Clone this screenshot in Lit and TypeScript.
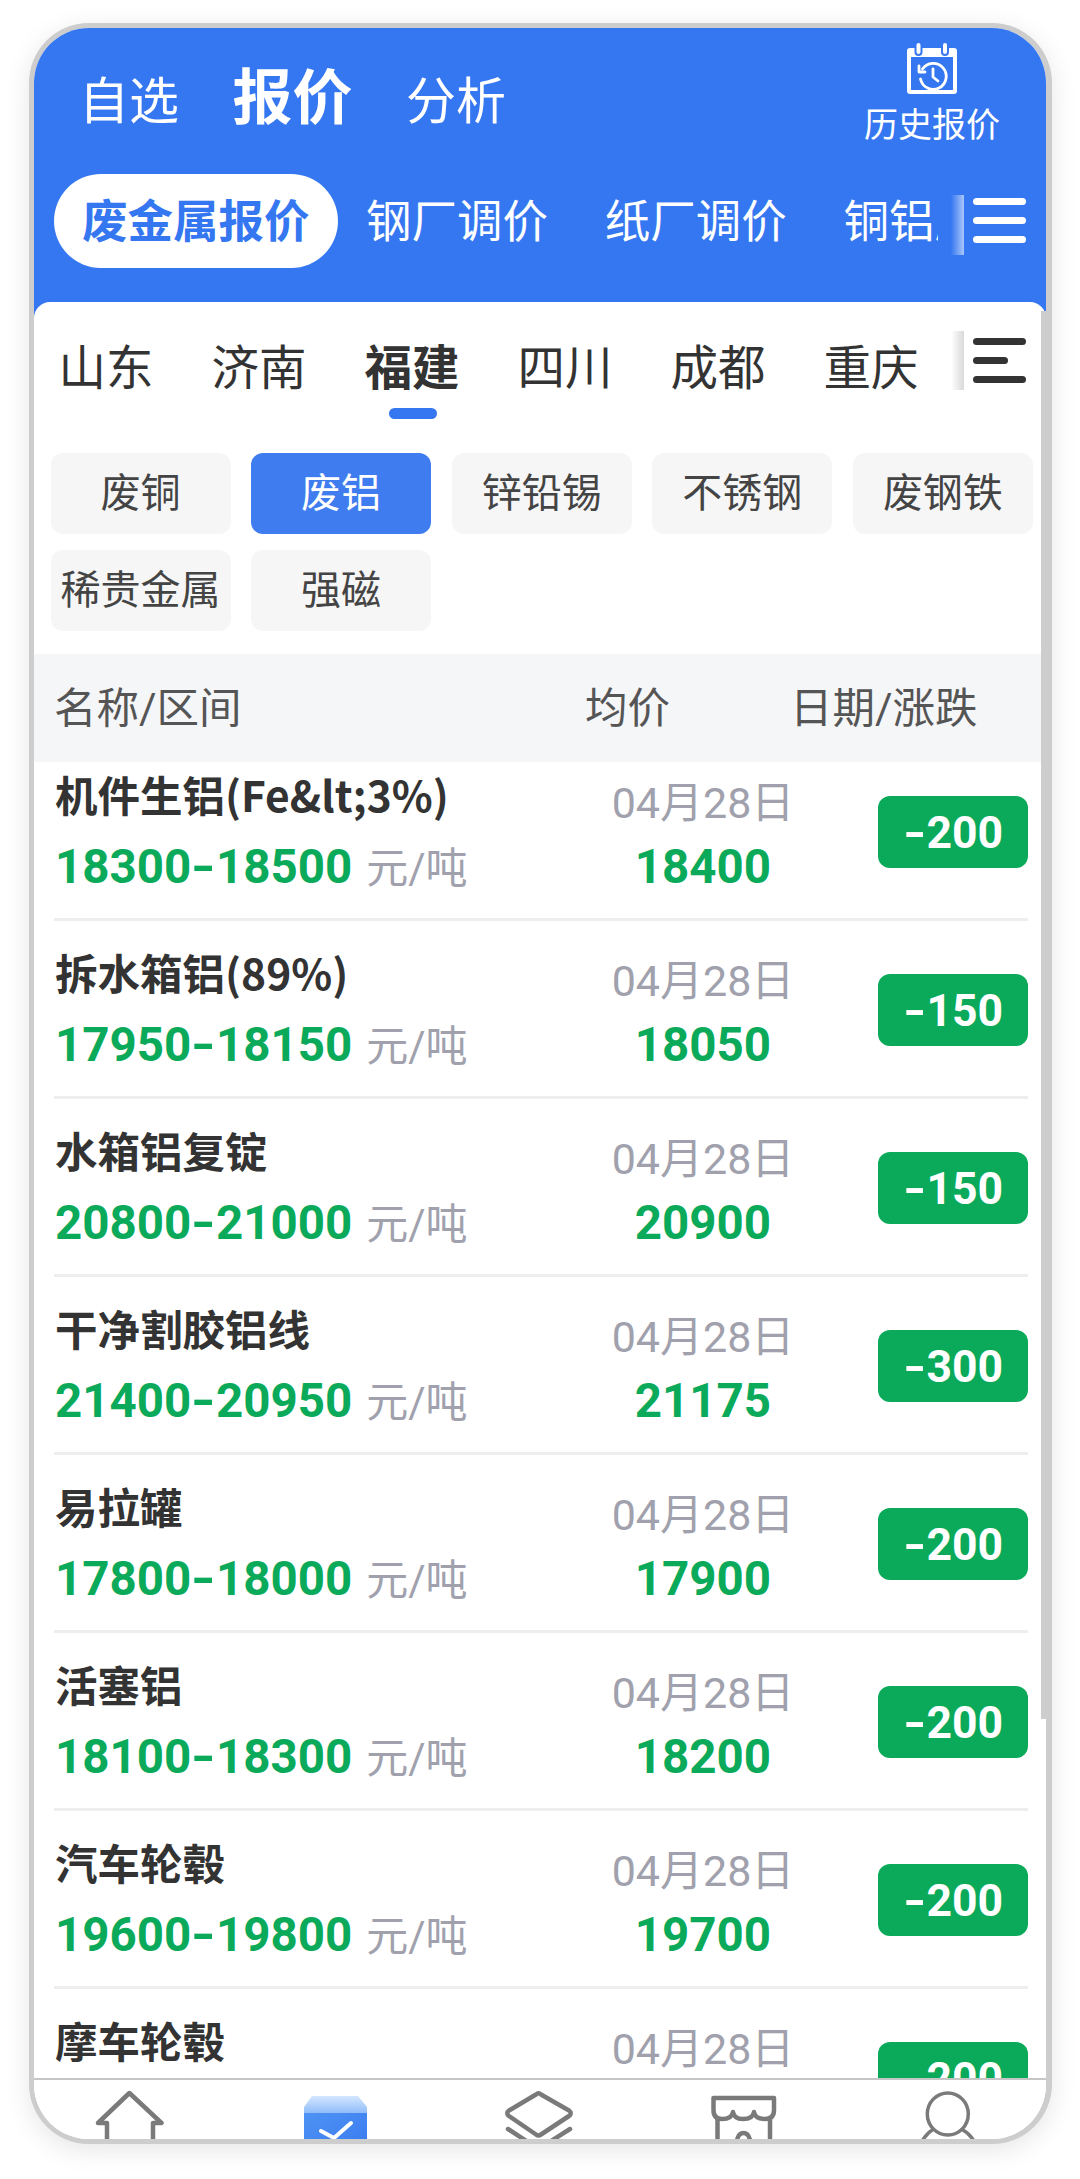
import { LitElement, html, css, svg } from "lit";
import { customElement } from "lit/decorators.js";

const ROWS = [
  ["机件生铝(Fe&lt;3%)", "18300", "18500", "18400", "200"],
  ["拆水箱铝(89%)", "17950", "18150", "18050", "150"],
  ["水箱铝复锭", "20800", "21000", "20900", "150"],
  ["干净割胶铝线", "21400", "20950", "21175", "300"],
  ["易拉罐", "17800", "18000", "17900", "200"],
  ["活塞铝", "18100", "18300", "18200", "200"],
  ["汽车轮毂", "19600", "19800", "19700", "200"],
  ["摩车轮毂", "18000", "18200", "18100", "200"],
];
const CITIES = ["山东", "济南", "福建", "四川", "成都", "重庆", "陕西"];
const CHIPS = ["废铜", "废铝", "锌铅锡", "不锈钢", "废钢铁", "稀贵金属", "强磁"];
const CATS = ["废金属报价", "钢厂调价", "纸厂调价", "铜铝废料"];

const NAV_ICONS = [
  svg`<path d="M12 64V37H3L34.4 7 66.5 37H58V64" fill="none" stroke="#7a7a7a" stroke-width="4.5" stroke-linejoin="round" stroke-linecap="round"/>`,
  svg`<defs>
      <linearGradient id="boxTop" x1="0" y1="0" x2="0" y2="1"><stop offset="0" stop-color="#d4e6ff"/><stop offset="1" stop-color="#8fbdf9"/></linearGradient>
      <linearGradient id="boxBody" x1="0" y1="0" x2="1" y2="1"><stop offset="0" stop-color="#4f93f4"/><stop offset="1" stop-color="#3a7bef"/></linearGradient>
    </defs>
    <path d="M6 27V21L14 10H60L69 21V27Z" fill="url(#boxTop)"/>
    <rect x="6" y="27" width="63" height="36" fill="url(#boxBody)"/>
    <path d="M23 45 36 52 53 37" fill="none" stroke="#fff" stroke-width="4" stroke-linecap="round" stroke-linejoin="round"/>`,
  svg`<g fill="none" stroke="#7a7a7a" stroke-width="4.5" stroke-linejoin="round" stroke-linecap="round">
      <path d="M36 8.5Q38.6 6 41 8.5L69 24.5Q72.5 27 69 30L41 48.5Q38.6 50.5 36 48.5L9 30Q5.5 27 9 24.5Z"/>
      <path d="M8 43 38.6 63 70 43"/>
    </g>`,
  svg`<g fill="none" stroke="#7a7a7a" stroke-width="4.5" stroke-linejoin="round" stroke-linecap="round">
      <path d="M11.5 12H72V24Q72 33 63 33 53 33 52 26 51 33 41 33 32 33 31 26 30 33 20 33 11.5 33 11.5 24Z"/>
      <path d="M15.5 33V64M68 33V64M34 64Q34 47 41.5 47 49 47 49 64"/>
    </g>`,
  svg`<g fill="none" stroke="#7a7a7a" stroke-width="3.5" stroke-linecap="round">
      <ellipse cx="42.8" cy="28" rx="20.5" ry="21"/>
      <path d="M17 55Q22 47 28 43.5M57 43.5Q64 47 69 55"/>
    </g>`,
];

@customElement("app-root")
export class AppRoot extends LitElement {
  static styles = css`
    :host { display: block; width: 1080px; height: 2179px; background: #fff; padding: 23px 0 0 29px; box-sizing: border-box;
      font-family: Roboto, "Noto Sans CJK SC", sans-serif; }
    .device { width: 1023px; height: 2121px; box-sizing: border-box; border: 5px solid #cdcdcd; border-right-width: 6px;
      border-radius: 60px; overflow: hidden; background: #fff; box-shadow: 0 6px 26px rgba(0,0,0,.1);
      display: flex; flex-direction: column; position: relative; }
    .blue { background: #3577f1; height: 290px; margin-bottom: -16px; flex: none; color: #fff; }
    .top { display: flex; justify-content: space-between; height: 146px; }
    .views { display: flex; align-items: baseline; padding: 36px 0 0 45px; gap: 53.5px; height: 70px; }
    .views span { font-size: 50px; line-height: 70px; }
    .views .on { font-size: 60px; font-weight: 700; }
    .hist { display: flex; flex-direction: column; align-items: center; padding: 15px 46px 0 0; }
    .hist svg { display: block; margin-bottom: 9px; }
    .hist span { font-size: 34px; line-height: 42px; }
    .cats { display: flex; align-items: center; height: 94px; padding-left: 20px; }
    .catscroll { display: flex; width: 884px; flex: none; overflow: hidden; height: 94px; align-items: center; }
    .cat { flex: none; font-size: 45.5px; padding: 0 28.4px; height: 94px; line-height: 98px; white-space: nowrap; }
    .cat.on { background: #fff; color: #3577f1; font-weight: 700; border-radius: 47px; padding: 0 28px; }
    .fade { flex: none; width: 13px; }
    .cats .fade { margin-left: 13px; height: 60px; margin-top: 8px; background: linear-gradient(90deg, #3577f1, #a9c6fa); }
    .burger { flex: none; width: 53px; margin-left: 9px; display: flex; flex-direction: column; gap: 12px; }
    .cats .burger { margin-top: -1px; }
    .burger i { display: block; height: 7px; border-radius: 4px; background: #fff; }
    .panel { flex: 1; min-height: 0; background: #fff; border-radius: 16px 16px 0 0; display: flex; flex-direction: column; position: relative; }
    .cities { display: flex; align-items: flex-start; height: 129px; flex: none; padding-left: 24.5px; }
    .cityscroll { display: flex; gap: 58px; width: 892.5px; flex: none; overflow: hidden; padding-top: 38px; height: 91px; }
    .city { flex: none; font-size: 47.5px; line-height: 58px; color: #333; position: relative; height: 91px; }
    .city.on { font-weight: 700; }
    .city.on::after { content: ""; position: absolute; left: 24px; width: 48px; height: 11px; top: 68px; background: #3577f1; border-radius: 6px; }
    .cities .fade { margin-top: 29px; height: 59px; background: linear-gradient(90deg, #fff, #d9d9d9); margin-left: 0; }
    .cities .burger { margin-top: 36px; margin-left: 9px; }
    .cities .burger i { background: #333; }
    .cities .burger i:nth-child(2) { width: 35px; }
    .chips { display: grid; grid-template-columns: repeat(5, 180px); column-gap: 20.6px; row-gap: 16.5px; padding: 22px 0 0 16.5px; flex: none; height: 223px; box-sizing: border-box; align-content: start; }
    .chip { height: 80.5px; box-sizing: border-box; padding-bottom: 7px; border-radius: 12px; background: #f6f6f7; color: #444; font-size: 40px; display: flex; align-items: center; justify-content: center; white-space: nowrap; }
    .chip.on { background: #3f7cf0; color: #fff; }
    .head { flex: none; height: 108px; box-sizing: border-box; padding: 0 0 8px 20px; background: #f5f6f8; display: flex; align-items: center; font-size: 42.5px; color: #555; position: relative; z-index: 1; }
    .head span:nth-child(1) { width: 531px; }
    .head span:nth-child(2) { width: 205px; }
    .list { flex: 1; min-height: 0; overflow: hidden; }
    .rows { margin-top: -19px; }
    .row { height: 178px; box-sizing: border-box; margin: 0 18px 0 20px; border-bottom: 3px solid #eeeeee; display: flex; align-items: flex-start; padding-left: 1px; }
    .left { width: 548px; flex: none; padding-top: 23px; }
    .name { font-family: "Noto Sans CJK SC", Roboto, sans-serif; font-size: 42.5px; font-weight: 700; color: #333; line-height: 56px; white-space: nowrap; }
    .range { font-size: 47.5px; font-weight: 700; color: #0aaa5a; line-height: 62px; white-space: nowrap; margin-top: 13.5px; display: flex; align-items: baseline; gap: 14px; }
    .dash { display: inline-block; transform: scaleX(1.35); margin: 0 3px; }
    .unit { font-size: 42px; font-weight: 400; color: #a0a1ad; }
    .mid { width: 200px; flex: none; text-align: center; padding-top: 31.5px; }
    .date { font-size: 43px; color: #a0a1ad; line-height: 56px; white-space: nowrap; }
    .avg { font-size: 47.5px; font-weight: 700; color: #0aaa5a; line-height: 62px; margin-top: 5px; }
    .badge { margin-left: auto; margin-top: 52.5px; width: 150px; height: 72px; box-sizing: border-box; padding-top: 3px; border-radius: 12px; background: #0aaa5a; color: #fff; font-size: 44.5px; font-weight: 700; display: flex; align-items: center; justify-content: center; }
    .nav { flex: none; height: 61px; box-sizing: border-box; border-top: 2px solid #c6c6c6; background: #fff; display: flex; overflow: hidden; position: relative; z-index: 2; }
    .nav div { flex: 1; display: flex; justify-content: center; padding-top: 6px; }
    .nav svg { flex: none; display: block; }
    .bar { position: absolute; right: 0; top: 283px; width: 5px; height: 1408px; background: #cdcdcd; z-index: 3; }
  `;

  render() {
    return html`<div class="device">
      <div class="blue">
        <div class="top">
          <div class="views"><span>自选</span><span class="on">报价</span><span>分析</span></div>
          <div class="hist">
            <svg width="50" height="52" viewBox="0 0 50 52">
              <rect x="0" y="5" width="50" height="46" rx="3" fill="#fff"/>
              <rect x="4" y="14" width="42" height="33" fill="#3577f1"/>
              <rect x="8.5" y="-1" width="6" height="13" rx="3" fill="#fff" stroke="#3577f1" stroke-width="2"/>
              <rect x="35" y="-1" width="6" height="13" rx="3" fill="#fff" stroke="#3577f1" stroke-width="2"/>
              <g fill="none" stroke="#fff" stroke-width="2.8" stroke-linecap="round" stroke-linejoin="round">
                <path d="M15.5 26A13 13 0 1 1 13.5 36"/>
                <path d="M12 23V29H18"/>
                <path d="M26 26V34L31 38"/>
              </g>
            </svg>
            <span>历史报价</span>
          </div>
        </div>
        <div class="cats">
          <div class="catscroll">
            ${CATS.map((c, i) => html`<div class="cat ${i === 0 ? "on" : ""}">${c}</div>`)}
          </div>
          <div class="fade"></div>
          <div class="burger"><i></i><i></i><i></i></div>
        </div>
      </div>
      <div class="panel">
        <div class="cities">
          <div class="cityscroll">
            ${CITIES.map((c) => html`<div class="city ${c === "福建" ? "on" : ""}">${c}</div>`)}
          </div>
          <div class="fade"></div>
          <div class="burger"><i></i><i></i><i></i></div>
        </div>
        <div class="chips">
          ${CHIPS.map((c) => html`<div class="chip ${c === "废铝" ? "on" : ""}">${c}</div>`)}
        </div>
        <div class="head"><span>名称/区间</span><span>均价</span><span>日期/涨跌</span></div>
        <div class="list"><div class="rows">
          ${ROWS.map((r) => html`<div class="row">
            <div class="left">
              <div class="name">${r[0]}</div>
              <div class="range"><span>${r[1]}<span class="dash">-</span>${r[2]}</span><span class="unit">元/吨</span></div>
            </div>
            <div class="mid">
              <div class="date">04月28日</div>
              <div class="avg">${r[3]}</div>
            </div>
            <div class="badge"><span><span class="dash">-</span>${r[4]}</span></div>
          </div>`)}
        </div></div>
        <div class="nav">
          ${NAV_ICONS.map((ic) => html`<div><svg width="80" height="70" viewBox="0 0 80 70">${ic}</svg></div>`)}
        </div>
      </div>
      <div class="bar"></div>
    </div>`;
  }
}
